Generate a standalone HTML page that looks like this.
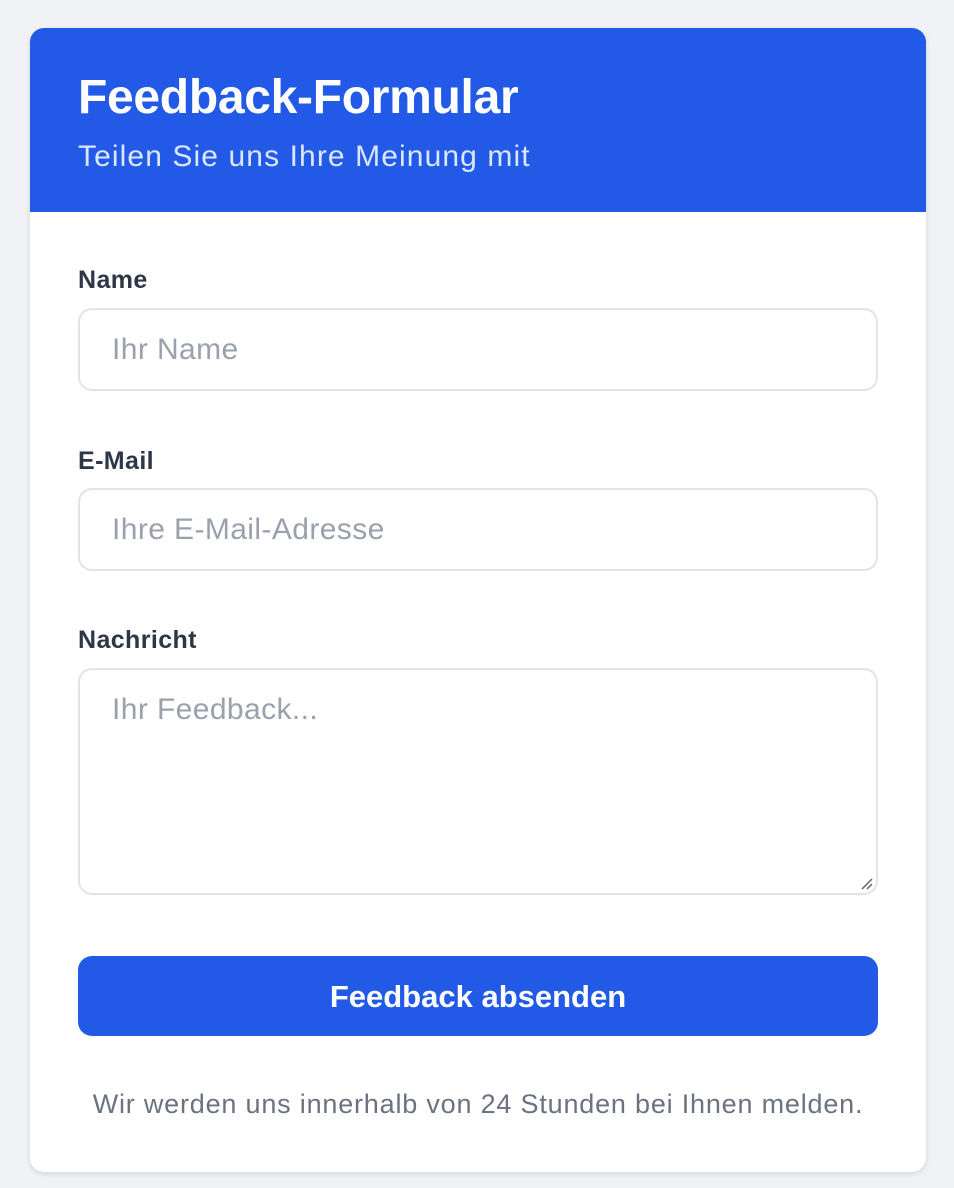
<!DOCTYPE html>
<html><head><meta charset="utf-8"><style>
*{box-sizing:border-box;margin:0;padding:0}
body{width:954px;height:1188px;background:#f0f2f6;font-family:"Liberation Sans",sans-serif;position:relative;overflow:hidden}
.card{position:absolute;left:30px;top:28px;width:896px;height:1144px;background:#fff;border-radius:14px;overflow:hidden;box-shadow:0 2px 6px rgba(0,0,0,.12)}
.hd{background:#225ae7;height:184px;padding-left:48px}
.hd h1{position:absolute;left:48px;top:42px;font-size:48px;font-weight:bold;color:#fff;letter-spacing:-0.3px}
.hd p{position:absolute;left:48px;top:112px;font-size:30px;color:#dbe6ff;letter-spacing:1.1px}
.lbl{position:absolute;left:48px;font-size:25px;font-weight:bold;color:#2d3748;letter-spacing:0.4px}
.in{position:absolute;left:48px;width:800px;border:2px solid #e2e4e8;border-radius:14px;font-size:30px;color:#9aa1ad;padding-left:32px;letter-spacing:0.4px}
.btn{position:absolute;left:48px;top:928px;width:800px;height:80px;background:#225ae7;border-radius:14px;color:#fff;font-size:31px;font-weight:bold;text-align:center;line-height:82px}
.ft{position:absolute;left:0;width:896px;top:1061px;text-align:center;font-size:27px;color:#6b7280;letter-spacing:0.8px}
</style></head><body>
<div class="card">
<div class="hd"><h1>Feedback-Formular</h1><p>Teilen Sie uns Ihre Meinung mit</p></div>
<div class="lbl" style="top:238px">Name</div>
<div class="in" style="top:280px;height:83px;line-height:80px">Ihr Name</div>
<div class="lbl" style="top:419px">E-Mail</div>
<div class="in" style="top:460px;height:83px;line-height:80px">Ihre E-Mail-Adresse</div>
<div class="lbl" style="top:598px">Nachricht</div>
<div class="in" style="top:640px;height:227px;padding-top:23px">Ihr Feedback...
<svg style="position:absolute;right:2px;bottom:2px" width="16" height="16"><path d="M14 4L4 14M14 9L9 14" stroke="#666" stroke-width="1.5"/></svg></div>
<div class="btn">Feedback absenden</div>
<div class="ft">Wir werden uns innerhalb von 24 Stunden bei Ihnen melden.</div>
</div>
</body></html>
